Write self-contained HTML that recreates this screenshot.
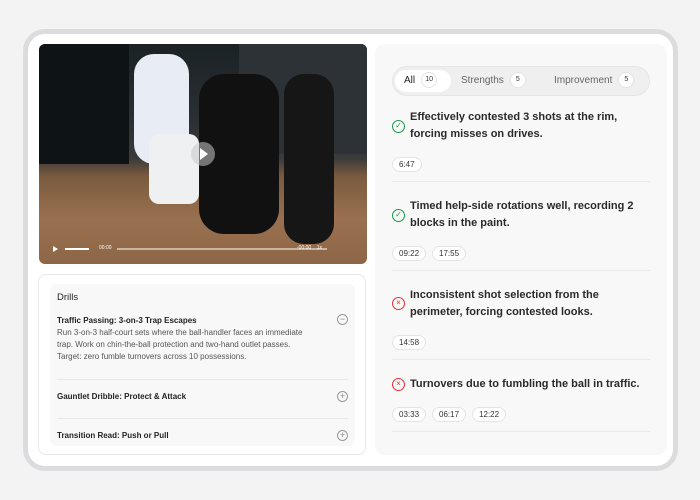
<!DOCTYPE html>
<html><head><style>
*{box-sizing:border-box;margin:0;padding:0}
body{width:700px;height:500px;background:#f3f3f3;font-family:"Liberation Sans",sans-serif;position:relative;overflow:hidden}
.frame{position:absolute;left:23px;top:29px;width:655px;height:442px;border:5px solid #dcdcdf;border-radius:22px;background:#fff}
.video{position:absolute;left:39px;top:44px;width:328px;height:220px;border-radius:6px;overflow:hidden;
background:linear-gradient(180deg,#1b2226 0%,#2a3034 35%,#3a3a3a 52%,#7a5a3e 60%,#9a7150 80%,#8c6646 100%)}
.drills{position:absolute;left:38px;top:274px;width:328px;height:181px;border:1px solid #e8e8e8;border-radius:8px;background:#fff}
.dinner{position:absolute;left:11px;top:9px;width:305px;height:162px;background:#f8f8f8;border-radius:7px;padding:8px 7px;overflow:hidden}
.dinner h3{font-size:9.5px;font-weight:normal;color:#222;margin-bottom:13px}
.dt{font-size:8px;font-weight:bold;color:#222}
.dp{font-size:8px;color:#555;line-height:12px;margin-top:2px;width:258px}
.ic{position:absolute;right:7px;width:11px;height:11px;border:1px solid #999;border-radius:50%;font-size:9px;line-height:9px;text-align:center;color:#888}
.hr{position:absolute;left:7px;right:7px;height:1px;background:#e8e8e8}
.right{position:absolute;left:375px;top:44px;width:292px;height:411px;background:#f8f8f8;border-radius:10px}
.tabs{position:absolute;left:17px;top:22px;width:258px;height:30px;background:#efefef;border-radius:15px;border:1px solid #e6e6e6}
.tab{position:absolute;top:3px;height:22px;font-size:10px;color:#666;line-height:22px}
.badge{display:inline-block;width:16px;height:16px;border-radius:8px;background:#fff;border:1px solid #e4e4e4;font-size:7px;color:#333;text-align:center;line-height:14px;margin-left:6px;vertical-align:middle}
.item{position:absolute;left:17px;width:258px}
.item p{font-size:11px;font-weight:bold;color:#2a2a2a;line-height:17px;margin-left:18px;width:230px}
.iok,.ibad{position:absolute;left:0;width:13px;height:13px;border-radius:50%;border:1.3px solid #1a9a4a;font-size:8px;text-align:center;line-height:10px;color:#1a9a4a}
.ibad{border-color:#e23030;color:#e23030}
.chip{display:inline-block;font-size:8px;color:#333;border:1px solid #e4e4e4;background:#fff;border-radius:8px;padding:2px 6px;margin-right:6px}
.sep{position:absolute;left:17px;width:258px;height:1px;background:#ebebeb}
</style></head><body>
<div class="frame"></div>
<div class="video">
 <div style="position:absolute;left:0;top:0;width:90px;height:120px;background:#0e1416"></div>
 <div style="position:absolute;left:200px;top:0;width:128px;height:110px;background:#2c3236"></div>
 <div style="position:absolute;left:95px;top:10px;width:55px;height:110px;background:#e8ecf4;border-radius:20px"></div>
 <div style="position:absolute;left:110px;top:90px;width:50px;height:70px;background:#eef0f2;border-radius:10px"></div>
 <div style="position:absolute;left:160px;top:30px;width:80px;height:160px;background:#111;border-radius:25px"></div>
 <div style="position:absolute;left:245px;top:30px;width:50px;height:170px;background:#161616;border-radius:20px"></div>
 <div style="position:absolute;left:152px;top:98px;width:24px;height:24px;border-radius:50%;background:rgba(200,200,200,.55)"></div>
 <div style="position:absolute;left:161px;top:104px;border-left:8px solid #fff;border-top:6px solid transparent;border-bottom:6px solid transparent"></div>
 <div style="position:absolute;left:78px;top:204px;width:210px;height:2px;background:rgba(255,255,255,.5)"></div>
 <div style="position:absolute;left:26px;top:204px;width:24px;height:1.5px;background:#fff"></div>
 <div style="position:absolute;left:14px;top:202px;border-left:5px solid #fff;border-top:3px solid transparent;border-bottom:3px solid transparent"></div>
 <div style="position:absolute;left:60px;top:201px;font-size:5px;color:#fff">00:00</div>
 <div style="position:absolute;left:258px;top:201px;font-size:5px;color:#fff">-00:00 &nbsp;&nbsp; 1x</div>
</div>
<div class="drills"><div class="dinner">
 <h3>Drills</h3>
 <div class="dt">Traffic Passing: 3-on-3 Trap Escapes</div>
 <div class="ic" style="top:30px">−</div>
 <div class="dp">Run 3-on-3 half-court sets where the ball-handler faces an immediate trap. Work on chin-the-ball protection and two-hand outlet passes. Target: zero fumble turnovers across 10 possessions.</div>
 <div class="hr" style="top:95px"></div>
 <div class="dt" style="position:absolute;left:7px;top:108px">Gauntlet Dribble: Protect &amp; Attack</div>
 <div class="ic" style="top:107px">+</div>
 <div class="hr" style="top:134px"></div>
 <div class="dt" style="position:absolute;left:7px;top:147px">Transition Read: Push or Pull</div>
 <div class="ic" style="top:146px">+</div>
</div></div>
<div class="right">
 <div class="tabs">
  <div class="tab" style="left:2px;width:56px;background:#fff;border-radius:11px;color:#222;padding-left:9px">All<span class="badge">10</span></div>
  <div class="tab" style="left:68px">Strengths<span class="badge">5</span></div>
  <div class="tab" style="left:161px">Improvement<span class="badge">5</span></div>
 </div>
 <div class="item" style="top:65px"><div class="iok" style="top:11px">✓</div><p>Effectively contested 3 shots at the rim, forcing misses on drives.</p></div>
 <div class="item" style="top:110px"><span class="chip">6:47</span></div>
 <div class="sep" style="top:137px"></div>
 <div class="item" style="top:154px"><div class="iok" style="top:11px">✓</div><p>Timed help-side rotations well, recording 2 blocks in the paint.</p></div>
 <div class="item" style="top:199px"><span class="chip">09:22</span><span class="chip">17:55</span></div>
 <div class="sep" style="top:226px"></div>
 <div class="item" style="top:243px"><div class="ibad" style="top:10px">×</div><p>Inconsistent shot selection from the perimeter, forcing contested looks.</p></div>
 <div class="item" style="top:288px"><span class="chip">14:58</span></div>
 <div class="sep" style="top:315px"></div>
 <div class="item" style="top:332px"><div class="ibad" style="top:2px">×</div><p style="width:250px">Turnovers due to fumbling the ball in traffic.</p></div>
 <div class="item" style="top:360px"><span class="chip">03:33</span><span class="chip">06:17</span><span class="chip">12:22</span></div>
 <div class="sep" style="top:387px"></div>
</div>
</body></html>
